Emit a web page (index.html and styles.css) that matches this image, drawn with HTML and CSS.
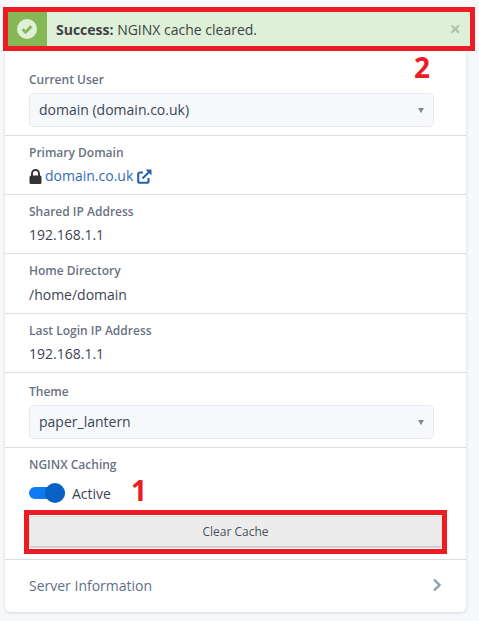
FILE: index.html
```html
<!DOCTYPE html>
<html lang="en">
<head>
<meta charset="utf-8">
<title>Server Details</title>
<link rel="stylesheet" href="styles.css">
</head>
<body>
<main class="page">
  <div class="alert-frame">
    <div class="alert">
      <div class="alert-icon">
        <svg width="20" height="20" viewBox="0 0 20 20"><circle cx="10" cy="10" r="10" fill="#dff0d8"/><path d="M5.6 10.3 8.6 13.2 14.4 7.2" fill="none" stroke="#85b854" stroke-width="2.8"/></svg>
      </div>
      <p class="alert-text"><strong>Success:</strong> NGINX cache cleared.</p>
      <span class="alert-close">×</span>
    </div>
  </div>
  <section class="card">
    <div class="row row-first">
      <div class="note note-two">2</div>
      <div class="label">Current User</div>
      <div class="select">domain (domain.co.uk)<span class="caret"></span></div>
    </div>
    <div class="row row-domain">
      <div class="label">Primary Domain</div>
      <div class="value domain-line">
        <svg class="lock" width="13" height="15" viewBox="0 0 13 15"><path d="M3 7V4.5a3.5 3.5 0 0 1 7 0V7" fill="none" stroke="#333" stroke-width="1.9"/><rect x="0.5" y="6.5" width="12" height="8.5" rx="1.5" fill="#333"/></svg>
        <a class="link">domain.co.uk</a>
        <svg class="ext" width="15" height="15" viewBox="0 0 15 15"><path d="M11.5 9v3.2a1.6 1.6 0 0 1-1.6 1.6H2.8a1.6 1.6 0 0 1-1.6-1.6V5.1a1.6 1.6 0 0 1 1.6-1.6H6" fill="none" stroke="#2b62ad" stroke-width="2.1"/><path d="M5.5 9.5 13 2" fill="none" stroke="#2b62ad" stroke-width="2.2"/><path d="M8.5 0.5H14.5V6.5Z" fill="#2b62ad"/></svg>
      </div>
    </div>
    <div class="row">
      <div class="label">Shared IP Address</div>
      <div class="value">192.168.1.1</div>
    </div>
    <div class="row row-tall">
      <div class="label">Home Directory</div>
      <div class="value">/home/domain</div>
    </div>
    <div class="row">
      <div class="label">Last Login IP Address</div>
      <div class="value">192.168.1.1</div>
    </div>
    <div class="row row-theme">
      <div class="label">Theme</div>
      <div class="select">paper_lantern<span class="caret"></span></div>
    </div>
    <div class="row row-cache">
      <div class="label">NGINX Caching</div>
      <div class="toggle-line">
        <span class="toggle"><span class="knob"></span></span>
        <span class="toggle-text">Active</span>
        <span class="note note-one">1</span>
      </div>
      <div class="button-frame"><div class="button">Clear Cache</div></div>
    </div>
    <div class="server">
      <span>Server Information</span>
      <svg width="10" height="14" viewBox="0 0 10 14"><path d="M2 1.5 7.5 7 2 12.5" fill="none" stroke="#8a9db5" stroke-width="2.4"/></svg>
    </div>
  </section>
</main>
</body>
</html>
```
FILE: styles.css
```css
* { box-sizing: border-box; }
html, body { margin: 0; padding: 0; }
body {
  background: #f7f8fa;
  font-family: "Open Sans", "Noto Sans", sans-serif;
  color: #3a4150;
}
.page { width: 479px; height: 621px; padding: 7px 4px 0 3px; }
.alert-frame {
  border: 5px solid #ed1c24;
  height: 44px;
  position: relative;
  z-index: 1;
}
.alert { display: flex; align-items: center; height: 34px; background: #dff0d8; }
.alert-icon {
  width: 39px; height: 34px; background: #85b854;
  display: flex; align-items: center; justify-content: center;
  flex: none;
  padding-right: 1px;
}
.alert-text { margin: 0 0 0 9px; font-size: 14px; color: #3e4144; flex: 1; }
.alert-text strong { font-weight: 700; }
.alert-close { margin-right: 9px; font-size: 20px; line-height: 20px; font-weight: 700; color: #b4c0ae; }
.card {
  width: 461px;
  margin-left: 2px;
  height: 561px;
  background: #fff;
  border-radius: 0 0 5px 5px;
  box-shadow: 0 1px 3px rgba(60, 70, 90, .2);
}
.row {
  height: 59px;
  padding: 9px 32px 0 24px;
  border-bottom: 1px solid #dcdde0;
  position: relative;
}
.row-first { height: 85px; padding-top: 21px; }
.row-tall { height: 60px; }
.row-tall .value { margin-top: 6px; }
.row-theme { height: 75px; padding-top: 11px; }
.row-cache { height: 112px; padding: 9px 19px 0 24px; }
.label { font-size: 12px; line-height: 16px; color: #6a7282; font-weight: 600; }
.value { font-size: 14px; line-height: 20px; margin-top: 5px; color: #3c4352; }
.select {
  margin-top: 5px;
  height: 34px;
  border: 1px solid #e8eaef;
  border-radius: 5px;
  background: #f6f8fc;
  font-size: 14px;
  line-height: 32px;
  padding: 0 8px 0 9px;
  color: #3a4555;
  display: flex;
  justify-content: space-between;
  align-items: center;
}
.caret {
  width: 0; height: 0;
  border-left: 3.5px solid transparent;
  border-right: 3.5px solid transparent;
  border-top: 5px solid #83878d;
  margin-right: 1px;
}
.domain-line { display: flex; align-items: center; }
.lock { margin-right: 3px; }
.link { color: #2f6db5; }
.ext { margin-left: 4px; }
.toggle-line { display: flex; align-items: center; height: 26px; margin-top: 7px; }
.toggle {
  width: 36px; height: 12px; border-radius: 6px; background: #0d79f2;
  position: relative; display: block;
}
.knob {
  position: absolute; right: 0; top: -4px;
  width: 20px; height: 20px; border-radius: 50%; background: #0a61c4;
}
.toggle-text { margin-left: 7px; font-size: 14px; color: #3c4352; }
.note { position: absolute; color: #ed1c24; font-weight: 700; font-size: 28px; line-height: 28px; }
.note-one { left: 126px; top: 28px; }
.note-two { left: 409px; top: 2px; }
.button-frame {
  border: 5px solid #ed1c24;
  height: 44px;
  margin: 4px 0 0 -5px;
  width: 423px;
  padding: 1px 0 0;
}
.button {
  height: 32px;
  background: #ececec;
  border: 1px solid #dcdcdc;
  border-bottom: 2px solid #d2d2d2;
  border-radius: 2px;
  text-align: center;
  font-size: 12px;
  line-height: 30px;
  color: #4a5160;
}
.server {
  height: 50px;
  padding: 0 24px;
  display: flex;
  align-items: center;
  justify-content: space-between;
  font-size: 14px;
  color: #5f6f8a;
}
```
